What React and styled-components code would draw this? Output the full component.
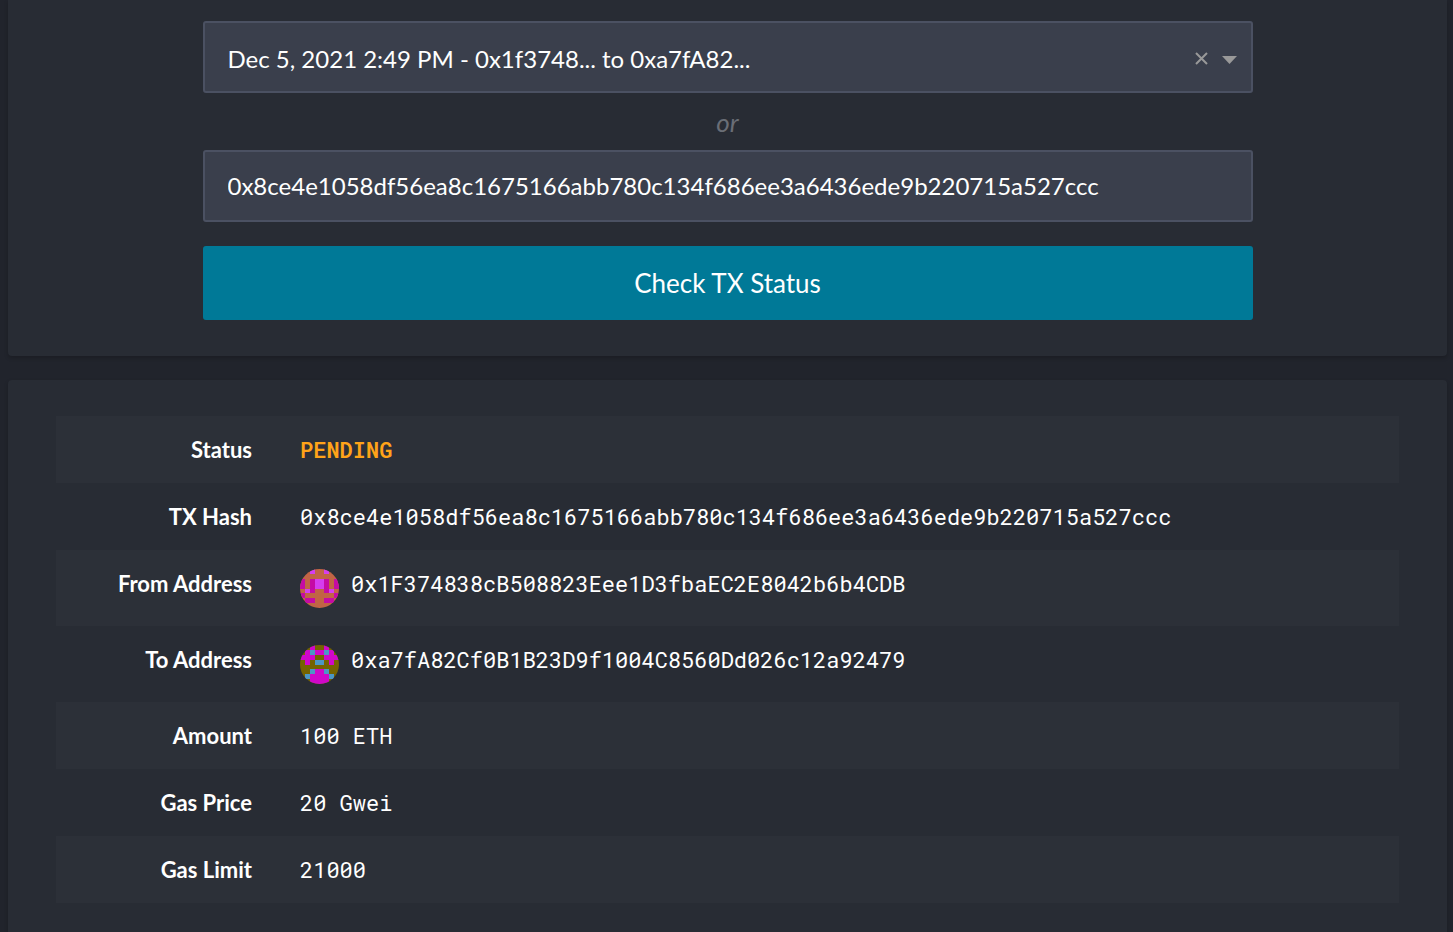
import React, { useState } from 'react';
import styled, { createGlobalStyle } from 'styled-components';

const GlobalStyle = createGlobalStyle`
  *, *::before, *::after { box-sizing: border-box; }
  body {
    margin: 0;
    background: #21242c;
    color: #fff;
    font-family: Lato, sans-serif;
    font-size: 24px;
  }
`;

const Page = styled.main`
  display: flex;
  flex-direction: column;
  gap: 24px;
  height: 100vh;
  overflow: hidden;
  padding: 0 6px 0 8px;
`;

const Panel = styled.section`
  flex: ${(p) => (p.$fill ? '1 0 auto' : 'none')};
  background: #282c34;
  border-radius: ${(p) => (p.$fill ? '4px 4px 0 0' : '0 0 4px 4px')};
  box-shadow: 0 2px 4px rgba(0, 0, 0, 0.2);
  padding: ${(p) => (p.$fill ? '36px 48px' : '21px 24px 36px')};
`;

const Form = styled.form`
  display: flex;
  flex-direction: column;
  max-width: 1050px;
  margin: 0 auto;
`;

const Field = styled.div`
  display: flex;
  align-items: center;
  height: 72px;
  padding: 0 14px 0 23px;
  background: #3a3f4c;
  border: 2px solid #4b5162;
  border-radius: 3px;
`;

const Select = styled.select`
  flex: 1;
  min-width: 0;
  padding: 4px 0 0;
  appearance: none;
  background: none;
  border: 0;
  outline: 0;
  color: #fff;
  font: 24px/32px Lato, sans-serif;
`;

const TextInput = styled.input`
  flex: 1;
  min-width: 0;
  padding: 0;
  background: none;
  border: 0;
  outline: 0;
  color: #fff;
  font: 24px/32px Lato, sans-serif;
`;

const ClearButton = styled.button`
  display: flex;
  margin-right: 14px;
  padding: 2px 0 0;
  background: none;
  border: 0;
  color: #999;
  cursor: pointer;
`;

const Arrow = styled.svg`
  display: block;
  margin-top: 6px;
  fill: #999;
  pointer-events: none;
`;

const Divider = styled.p`
  margin: 0;
  padding: 13px 0 12px;
  color: #6a6e76;
  font-size: 26px;
  font-style: italic;
  line-height: 32px;
  text-align: center;
`;

const Submit = styled.button`
  height: 74px;
  margin-top: 24px;
  padding: 0;
  background: #007997;
  border: 0;
  border-radius: 3px;
  color: #fff;
  font: 26px/32px Lato, sans-serif;
  cursor: pointer;
`;

const Details = styled.table`
  width: 100%;
  border-collapse: collapse;
  line-height: 31px;
`;

const Row = styled.tr`
  &:nth-child(odd) { background: #2c3038; }
`;

const Label = styled.th`
  width: 220px;
  padding: 18px 24px;
  font-size: 22px;
  font-weight: 700;
  text-align: right;
  vertical-align: top;
  white-space: nowrap;
`;

const Value = styled.td`
  padding: 18px 24px;
  color: ${(p) => (p.$pending ? '#ffa319' : '#fff')};
  font-family: "Roboto Mono", "DejaVu Sans Mono", monospace;
  font-size: 22px;
  font-weight: ${(p) => (p.$pending ? 600 : 400)};
  vertical-align: top;
`;

const Address = styled.div`
  display: flex;
  gap: 12px;
  height: 40px;
`;

const Avatar = styled.svg`
  flex: none;
  width: 39px;
  height: 39px;
  margin-top: 1px;
  border-radius: 50%;
`;

const FROM_ICON = {
  colors: ['#c16445', '#c50ba4', '#d53ef0'],
  half: ['0020', '0000', '1012', '1012', '0210', '1000', '0110', '0000'],
};

const TO_ICON = {
  colors: ['#756300', '#d007c9', '#4c97c5'],
  half: ['0010', '0121', '1110', '0102', '0000', '0021', '0211', '0011'],
};

function Identicon({ icon }) {
  return (
    <Avatar viewBox="0 0 8 8" shapeRendering="crispEdges" aria-hidden="true">
      <rect width="8" height="8" fill={icon.colors[0]} />
      {icon.half.flatMap((line, y) =>
        [...line, ...[...line].reverse()].map((c, x) =>
          c === '0' ? null : (
            <rect key={`${x}-${y}`} x={x} y={y} width="1" height="1" fill={icon.colors[c]} />
          ),
        ),
      )}
    </Avatar>
  );
}

const HASH = '0x8ce4e1058df56ea8c1675166abb780c134f686ee3a6436ede9b220715a527ccc';

const rows = [
  { label: 'Status', value: 'PENDING', pending: true },
  { label: 'TX Hash', value: HASH },
  { label: 'From Address', value: '0x1F374838cB508823Eee1D3fbaEC2E8042b6b4CDB', icon: FROM_ICON },
  { label: 'To Address', value: '0xa7fA82Cf0B1B23D9f1004C8560Dd026c12a92479', icon: TO_ICON },
  { label: 'Amount', value: '100 ETH' },
  { label: 'Gas Price', value: '20 Gwei' },
  { label: 'Gas Limit', value: '21000' },
];

export default function App() {
  const [hash, setHash] = useState(HASH);
  return (
    <>
      <GlobalStyle />
      <Page>
        <Panel>
          <Form onSubmit={(e) => e.preventDefault()}>
            <Field>
              <Select aria-label="Recent transaction">
                <option>Dec 5, 2021 2:49 PM - 0x1f3748... to 0xa7fA82...</option>
              </Select>
              <ClearButton type="button" aria-label="Clear selection">
                <svg width="13" height="13" viewBox="0 0 13 13" stroke="currentColor" strokeWidth="2">
                  <path d="M1 1 12 12M12 1 1 12" />
                </svg>
              </ClearButton>
              <Arrow width="15" height="8" viewBox="0 0 15 8" aria-hidden="true">
                <path d="M0 0h15L7.5 8z" />
              </Arrow>
            </Field>
            <Divider>or</Divider>
            <Field>
              <TextInput
                aria-label="Transaction hash"
                value={hash}
                onChange={(e) => setHash(e.target.value)}
              />
            </Field>
            <Submit type="submit">Check TX Status</Submit>
          </Form>
        </Panel>
        <Panel $fill>
          <Details>
            <tbody>
              {rows.map((row) => (
                <Row key={row.label}>
                  <Label scope="row">{row.label}</Label>
                  <Value $pending={row.pending}>
                    {row.icon ? (
                      <Address>
                        <Identicon icon={row.icon} />
                        {row.value}
                      </Address>
                    ) : (
                      row.value
                    )}
                  </Value>
                </Row>
              ))}
            </tbody>
          </Details>
        </Panel>
      </Page>
    </>
  );
}
